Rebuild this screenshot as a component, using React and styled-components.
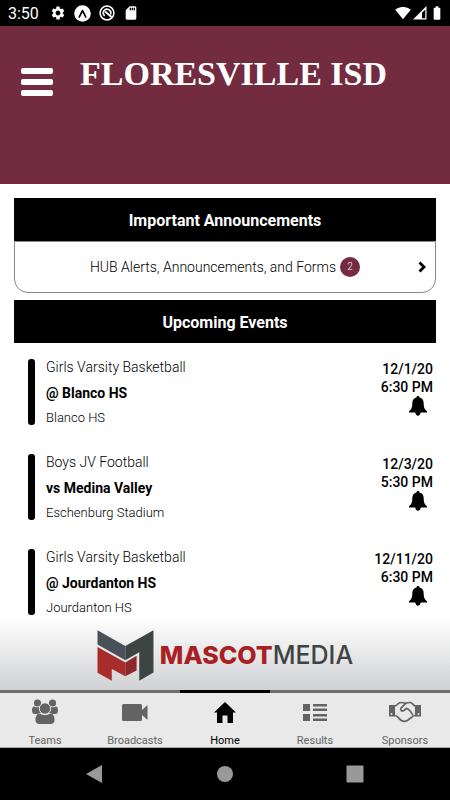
import styled, { createGlobalStyle } from 'styled-components';
import { MdSettings, MdSdCard, MdSignalWifi4Bar, MdBatteryFull } from 'react-icons/md';

const events = [
  { sport: 'Girls Varsity Basketball', prefix: '@', opponent: 'Blanco HS', place: 'Blanco HS', date: '12/1/20', time: '6:30 PM' },
  { sport: 'Boys JV Football', prefix: 'vs', opponent: 'Medina Valley', place: 'Eschenburg Stadium', date: '12/3/20', time: '5:30 PM' },
  { sport: 'Girls Varsity Basketball', prefix: '@', opponent: 'Jourdanton HS', place: 'Jourdanton HS', date: '12/11/20', time: '6:30 PM' },
];

const ExpoIcon = () => (
  <svg width="17" height="17" viewBox="0 0 17 17">
    <circle cx="8.5" cy="8.5" r="8.3" fill="#fff" />
    <path d="M5.3 11.9 8.5 5.6l3.2 6.3" fill="none" stroke="#000" strokeWidth="1.7" strokeLinejoin="round" strokeLinecap="round" />
  </svg>
);

const BlockedIcon = () => (
  <svg width="16" height="16" viewBox="0 0 16 16" fill="none" stroke="#fff">
    <circle cx="8" cy="8" r="6.900" strokeWidth="1.5" />
    <path d="M5.700 10.800A3.700 3.700 0 1 1 11.400 9.500" strokeWidth="1.700" />
    <path d="m6 6.500 6.500 5.500" strokeWidth="2" />
  </svg>
);

const SignalIcon = () => (
  <svg width="14" height="14" viewBox="0 0 14 14">
    <path d="M0 13.5 13.5 0v13.5z" fill="#fff" />
    <path d="M9 6.7 12.3 3.4v8.9H9z" fill="#000" />
  </svg>
);

const BellIcon = () => (
  <svg width="20" height="20" viewBox="0 0 20 20">
    <path d="M10 0c1 0 1.5.6 1.5 1.4 2.9.7 4.2 2.8 4.2 5.6 0 4.600.8 6.200 3.300 8.200V16.500H1V15.200c2.500-2 3.300-3.600 3.300-8.200 0-2.800 1.300-4.900 4.200-5.600C8.500.6 9 0 10 0zM7.300 16.500h5.400c-.2 2-1.300 3.200-2.700 3.200s-2.500-1.200-2.700-3.200z" />
  </svg>
);

const TeamsIcon = () => (
  <svg width="28" height="26" viewBox="0 0 28 26" fill="currentColor">
    <circle cx="6.500" cy="4" r="3.600" />
    <circle cx="21.500" cy="4" r="3.600" />
    <path d="M1 11.500C1 9.500 1.500 7.300 3.200 7.500c1.900 1.100 3.700 1.100 5.400.2-.5 2.600.1 4.600 1.400 6.200-1.400.1-2.600.2-3.600 1H3.600C1.800 14.900 1 13.500 1 11.500zM27 11.500c0-2-.5-4.200-2.200-4-1.900 1.100-3.700 1.100-5.400.2.500 2.600-.1 4.600-1.400 6.200 1.400.1 2.600.2 3.600 1h2.800c1.800 0 2.600-1.400 2.600-3.400z" />
    <path d="M4.500 21c0-3.600 1.300-6.500 4.300-6.500 3.400 2.300 7 2.300 10.400 0 3 0 4.300 2.900 4.300 6.500 0 2.700-1.600 4-4 4h-11c-2.400 0-4-1.300-4-4z" />
    <circle cx="14" cy="9.500" r="5.700" stroke="#e9e9e9" strokeWidth="1" />
  </svg>
);

const CameraIcon = () => (
  <svg width="26" height="26" viewBox="0 0 26 26" fill="currentColor">
    <path d="M1.500 5h17q1.500 0 1.500 1.500V11l5.500-5v15L20 16v4.500q0 1.500-1.500 1.500h-17Q0 22 0 20.500v-14Q0 5 1.500 5z" />
  </svg>
);

const HomeIcon = () => (
  <svg width="26" height="26" viewBox="0 0 26 26" fill="currentColor">
    <path d="M13 3 24 13.500h-3V24h-5.500v-7.500h-5V24H5V13.500H2z" />
  </svg>
);

const ResultsIcon = () => (
  <svg width="26" height="26" viewBox="0 0 26 26" fill="currentColor">
    <path d="M1 5h7v7H1zM1 15h7v7H1zM11 5h14v2.500H11zM11 9.500h14V12H11zM11 15h14v2.500H11zM11 19.500h14V22H11z" />
  </svg>
);

const HandshakeIcon = () => (
  <svg width="32" height="26" viewBox="0 0 32 26" fill="none" stroke="currentColor" strokeWidth="1.700" strokeLinejoin="round" strokeLinecap="round">
    <path d="M0 6h6v11.500H0zM26 6h6v11.500h-6z" fill="currentColor" stroke="none" />
    <circle cx="2.500" cy="15" r="1" fill="#e9e9e9" stroke="none" />
    <circle cx="29.500" cy="15" r="1" fill="#e9e9e9" stroke="none" />
    <path d="M6 7c2-.5 3-3.500 6-3.500 2 0 3 .2 4.500 1C18 3.500 19 3.500 21 3.500c2.500 0 3.500 3 5 3.500" />
    <path d="M6 16.500c2.500 0 3.500 3 6 4.700 2 1.500 4.500 1.500 7-.2l4-3c.8-.8 1.500-1.500 3-1.500" />
    <path d="m16.500 4.500-4.300 4.300c-1.600 1.900.6 4 2.600 2.700l2.700-2.200c1.500.5 4.500 3.700 6 6.200" />
  </svg>
);

const MascotLogo = () => (
  <svg width="57" height="51" viewBox="51 57 171 154">
    <path d="M52 58 136 105v43L52 101z" fill="#495059" />
    <path d="m136 105 85-47v127l-43 25v-86l-42 24z" fill="#3d4543" />
    <path d="m52 108 84 47v42l-41-22v35l-43-24z" fill="#a92c2d" />
    <path d="m136 155 34-20v44l-34 18z" fill="#8e282b" />
  </svg>
);

const tabs = [
  { label: 'Teams', icon: <TeamsIcon /> },
  { label: 'Broadcasts', icon: <CameraIcon /> },
  { label: 'Home', icon: <HomeIcon />, active: true },
  { label: 'Results', icon: <ResultsIcon /> },
  { label: 'Sponsors', icon: <HandshakeIcon /> },
];

const App = () => {
  return (
    <Screen>
      <GlobalStyle />
      <StatusBar>
        <Clock>3:50</Clock>
        <MdSettings size={16} />
        <ExpoIcon />
        <BlockedIcon />
        <MdSdCard size={16} />
        <StatusRight>
          <MdSignalWifi4Bar size={16} />
          <SignalIcon />
          <MdBatteryFull size={16} />
        </StatusRight>
      </StatusBar>
      <Header>
        <MenuButton aria-label="Menu">
          <span />
          <span />
          <span />
        </MenuButton>
        <Title>FLORESVILLE ISD</Title>
      </Header>
      <Content>
        <SectionTitle>Important Announcements</SectionTitle>
        <Announcement href="#announcements">
          HUB Alerts, Announcements, and Forms
          <Badge>2</Badge>
          <Chevron width="8" height="12" viewBox="0 0 8 12">
            <path d="m1.500 1.500 4.500 4.500-4.500 4.500" fill="none" stroke="#000" strokeWidth="2.800" />
          </Chevron>
        </Announcement>
        <SectionTitle>Upcoming Events</SectionTitle>
        <EventList>
          {events.map((event) => (
            <EventRow key={event.date}>
              <EventInfo>
                <Sport>{event.sport}</Sport>
                <Opponent>{event.prefix} {event.opponent}</Opponent>
                <Place>{event.place}</Place>
              </EventInfo>
              <EventTime>
                <span>{event.date}</span>
                <span>{event.time}</span>
                <BellButton aria-label="Notify me">
                  <BellIcon />
                </BellButton>
              </EventTime>
            </EventRow>
          ))}
        </EventList>
      </Content>
      <Sponsor href="#sponsor">
        <MascotLogo />
        <Wordmark>
          <b>MASCOT</b>MEDIA
        </Wordmark>
      </Sponsor>
      <TabBar>
        {tabs.map((tab) => (
          <Tab key={tab.label} $active={tab.active}>
            <TabIcon>{tab.icon}</TabIcon>
            {tab.label}
          </Tab>
        ))}
      </TabBar>
      <SystemNav>
        <SystemButton aria-label="Back">
          <svg width="18" height="18" viewBox="0 0 18 18"><path d="M0 9 16 0v18z" fill="#999" /></svg>
        </SystemButton>
        <SystemButton aria-label="Home">
          <svg width="18" height="18" viewBox="0 0 18 18"><circle cx="9" cy="9" r="8" fill="#999" /></svg>
        </SystemButton>
        <SystemButton aria-label="Recent apps">
          <svg width="18" height="18" viewBox="0 0 18 18"><rect x="0.500" y="0.500" width="17" height="17" rx="1" fill="#999" /></svg>
        </SystemButton>
      </SystemNav>
    </Screen>
  );
}

const GlobalStyle = createGlobalStyle`
  * {
    box-sizing: border-box;
  }

  body {
    margin: 0;
    background: #fff;
    color: #000;
    font-family: Roboto, "Liberation Sans", sans-serif;
  }

  button {
    padding: 0;
    border: 0;
    background: none;
    font: inherit;
    cursor: pointer;
  }

  a {
    color: inherit;
    text-decoration: none;
  }

  svg {
    display: block;
    flex: none;
  }
`;

const Screen = styled.div`
  display: flex;
  flex-direction: column;
  height: 100vh;
`;

const StatusBar = styled.div`
  display: flex;
  flex: none;
  align-items: center;
  gap: 8px;
  height: 26px;
  padding: 0 5px 0 8px;
  background: #000;
  color: #fff;
`;

const Clock = styled.span`
  margin-right: 3px;
  font-size: 16px;
`;

const StatusRight = styled.div`
  display: flex;
  align-items: center;
  gap: 2px;
  margin-left: auto;
`;

const Header = styled.header`
  display: flex;
  flex: none;
  align-items: flex-start;
  gap: 27px;
  height: 158px;
  padding: 27px 21px;
  background: #722b3f;
`;

const MenuButton = styled.button`
  display: grid;
  gap: 5px;
  width: 32px;
  margin-top: 15px;

  span {
    height: 6px;
    border-radius: 2px;
    background: #fff;
  }
`;

const Title = styled.h1`
  margin: 0;
  color: #fff;
  font-family: "Liberation Serif", serif;
  font-size: 34px;
  line-height: 42px;
  white-space: nowrap;
`;

const Content = styled.main`
  flex: 1;
  min-height: 0;
  padding: 14px 14px 0;
  overflow: hidden;
`;

const SectionTitle = styled.h2`
  height: 43px;
  margin: 0;
  background: #000;
  color: #fff;
  font-size: 16px;
  font-weight: 700;
  line-height: 45px;
  text-align: center;
`;

const Announcement = styled.a`
  display: flex;
  position: relative;
  align-items: center;
  justify-content: center;
  gap: 4px;
  height: 52px;
  margin-bottom: 7px;
  border: 1px solid #888;
  border-radius: 0 0 14px 14px;
  font-size: 14px;
  font-weight: 300;
`;

const Badge = styled.span`
  width: 20px;
  border-radius: 50%;
  background: #722b3f;
  color: #fff;
  font-size: 10px;
  line-height: 20px;
  text-align: center;
`;

const Chevron = styled.svg`
  position: absolute;
  right: 9px;
`;

const EventList = styled.ul`
  display: grid;
  gap: 29px;
  margin: 16px 0 0;
  padding: 0 3px 0 14px;
  list-style: none;
`;

const EventRow = styled.li`
  display: flex;
  justify-content: space-between;
  height: 66px;

  &::before {
    content: "";
    width: 7px;
    margin-right: 11px;
    border-radius: 3px;
    background: #000;
  }
`;

const EventInfo = styled.div`
  flex: 1;
`;

const Sport = styled.div`
  font-size: 14px;
  font-weight: 300;
  line-height: 16px;
`;

const Opponent = styled.div`
  margin: 10px 0;
  font-size: 14px;
  font-weight: 700;
  line-height: 16px;
`;

const Place = styled.div`
  font-size: 13px;
  font-weight: 300;
  line-height: 14px;
`;

const EventTime = styled.div`
  display: flex;
  flex-direction: column;
  align-items: flex-end;
  padding-top: 1px;
  font-size: 14px;
  font-weight: 500;
  line-height: 18px;
`;

const BellButton = styled.button`
  margin-right: 5px;
`;

const Sponsor = styled.a`
  display: flex;
  flex: none;
  align-items: center;
  justify-content: center;
  gap: 6px;
  height: 70px;
  background: linear-gradient(#fdfdfd, #d0d1d3);
`;

const Wordmark = styled.span`
  color: #3d4543;
  font-family: Inter, sans-serif;
  font-size: 25px;
  font-weight: 500;

  b {
    color: #a92022;
    font-weight: 800;
  }
`;

const TabBar = styled.nav`
  display: grid;
  flex: none;
  grid-template-columns: repeat(5, 1fr);
  height: 58px;
  border-bottom: 1px solid #aaa;
  background: #e9e9e9;
`;

const Tab = styled.button`
  display: flex;
  flex-direction: column;
  align-items: center;
  gap: 4px;
  border-top: 3px solid ${({ $active }) => ($active ? '#000' : '#6e6e6e')};
  color: ${({ $active }) => ($active ? '#000' : '#636363')};
  font-size: 11px;
  line-height: 14px;
`;

const TabIcon = styled.span`
  display: grid;
  place-items: center;
  height: 37px;
`;

const SystemNav = styled.div`
  display: flex;
  flex: none;
  align-items: center;
  justify-content: center;
  gap: 112px;
  height: 52px;
  background: #000;
`;

const SystemButton = styled.button`
  width: 18px;
  height: 18px;
`;

export default App;
